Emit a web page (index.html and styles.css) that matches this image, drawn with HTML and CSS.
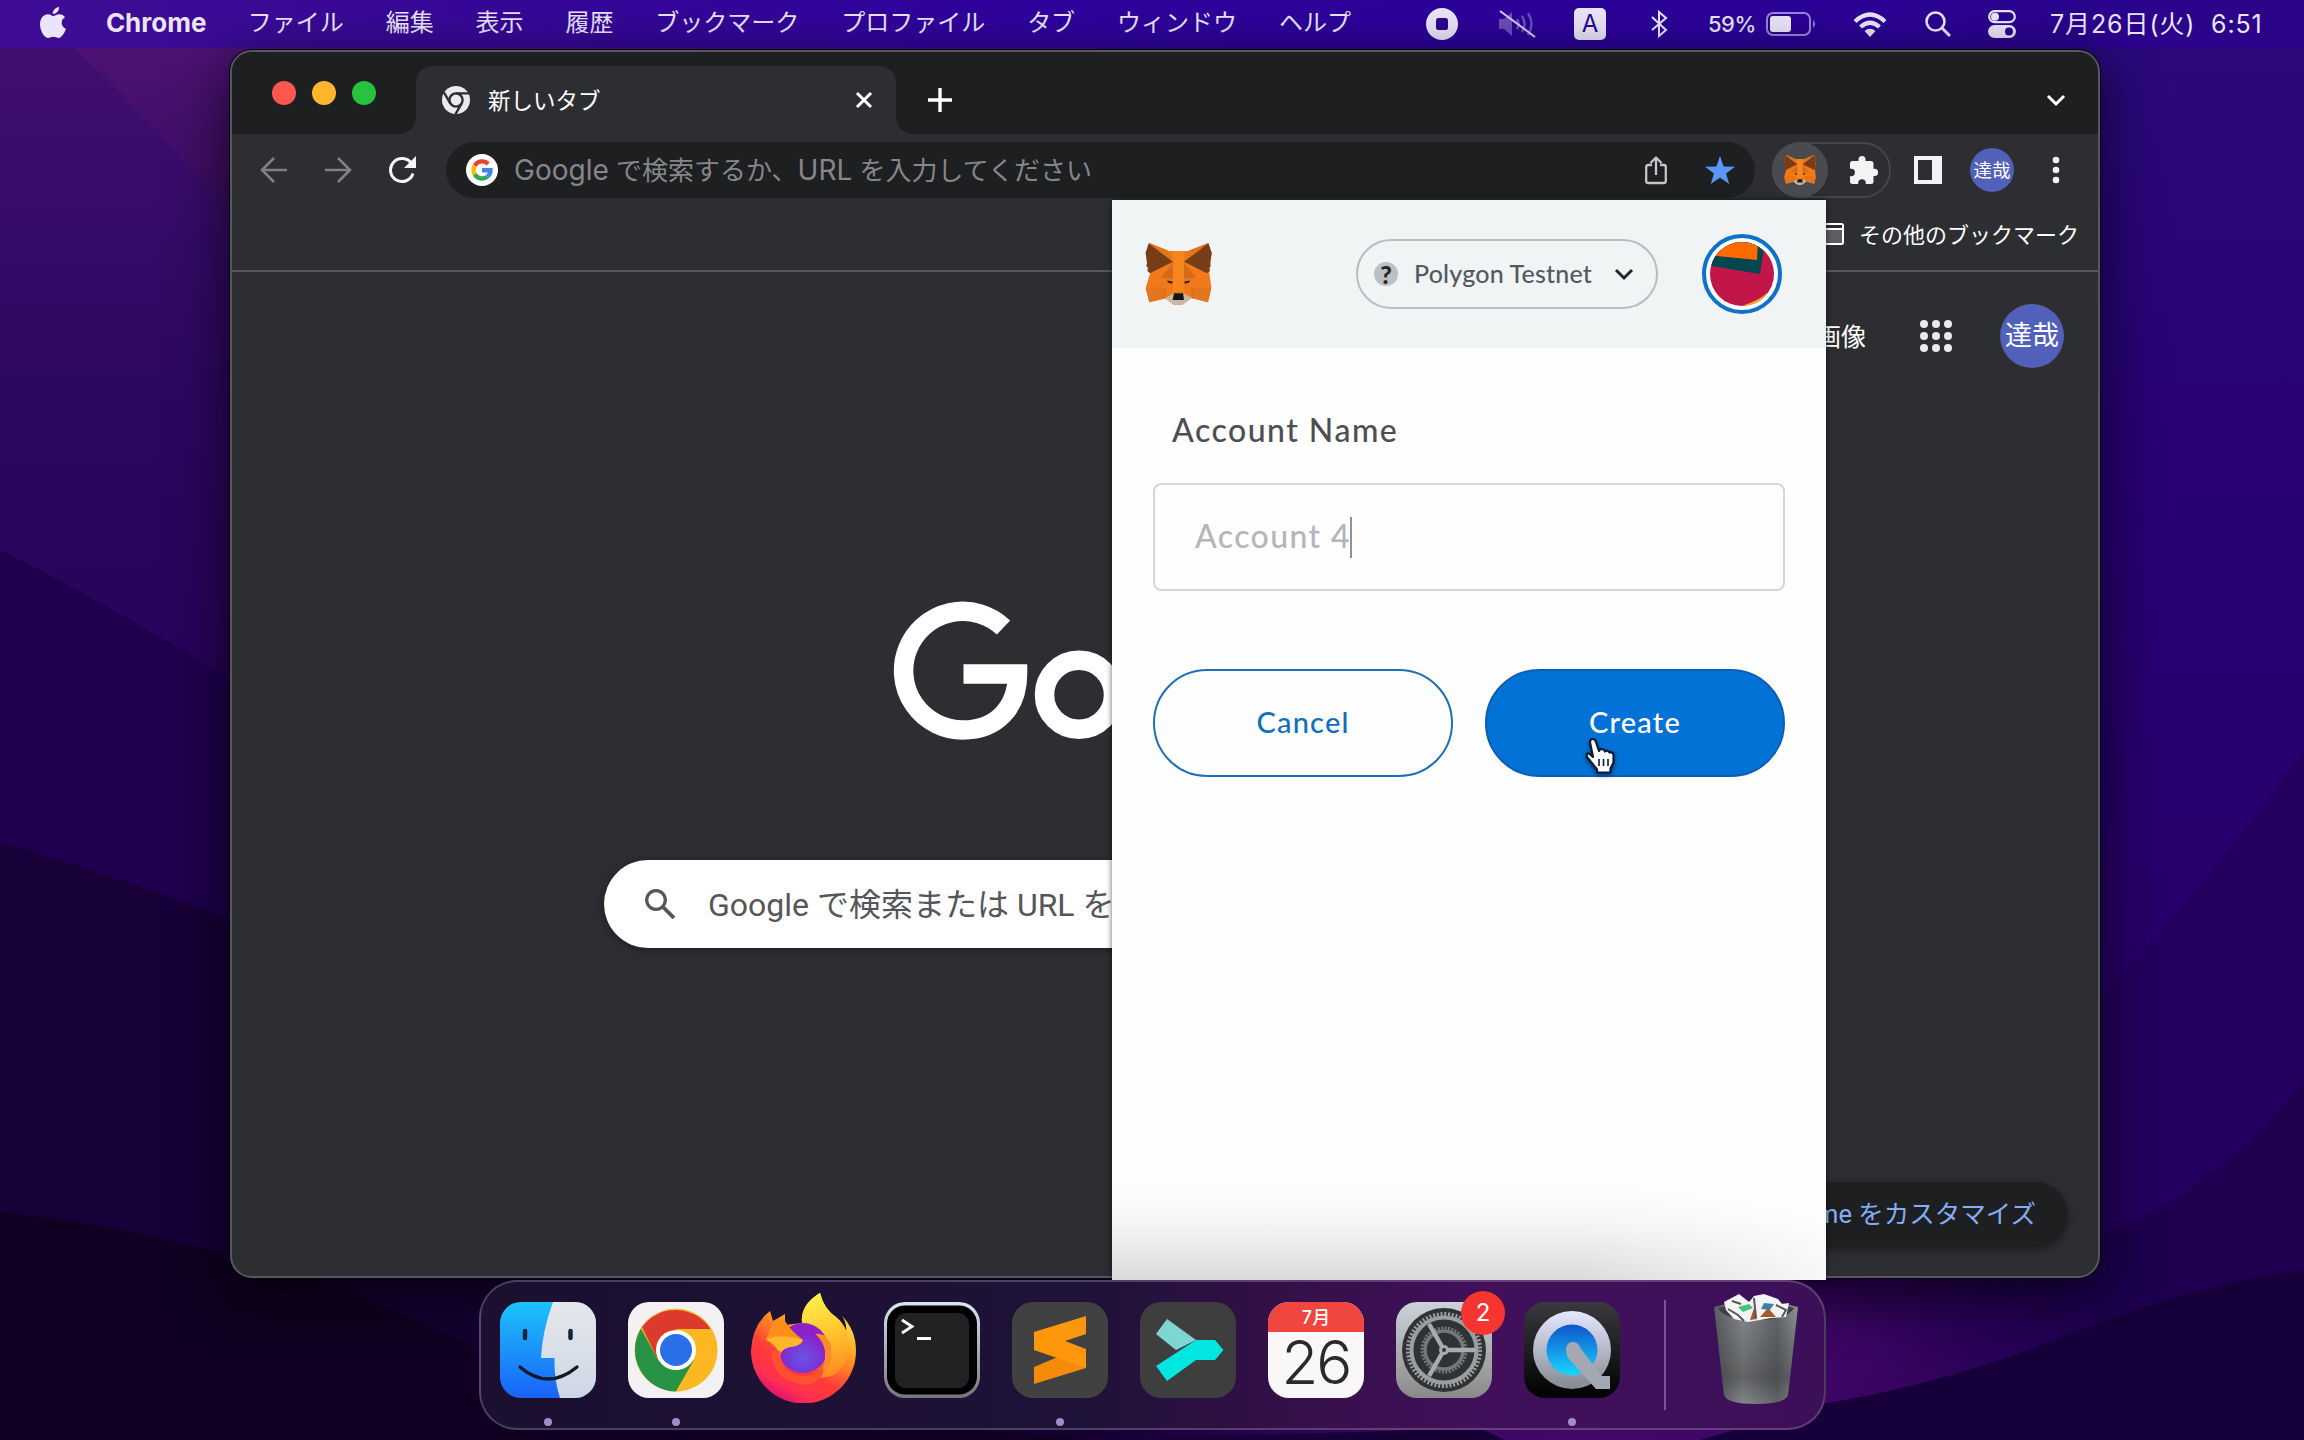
FILE: index.html
```html
<!DOCTYPE html>
<html lang="ja">
<head>
<meta charset="utf-8">
<title>新しいタブ</title>
<link rel="stylesheet" href="styles.css">
</head>
<body>
<svg class="defs" width="0" height="0" aria-hidden="true">
  <defs>
    <symbol id="fox" viewBox="78 100 197 184">
      <path fill="#f07a1b" d="M90 100 148 124h57l60-24 10 30-7 60 6 42-10 44-49-13-27 20h-26l-24-18-48 11-11-42 13-44-13-60z"/>
      <path fill="#e2761b" d="m90 100 58 24 12 32zM265 100l-60 24-12 32z"/>
      <path fill="#763d16" d="m88 101 72 55-68 34-8-8 2-8-5-6 2-8-4-30zM265 101l-72 55 68 34 9-8-3-8 5-6-2-8 5-30z"/>
      <path fill="#d56a1c" d="m160 158-36 46 40 2zM193 158l36 46-40 2z"/>
      <path fill="#cd6116" d="m102 232 36 2-2 32zM251 232l-36 2 2 32z"/>
      <path fill="#e4751f" d="m80 234 56 0-2 30-44 12zM274 234l-57 0 2 30 45 12z"/>
      <path fill="#f6851b" d="M160 124h33v120h-33z"/>
      <path fill="#2b2422" d="m143 211 16 3-1 7-13-4zM210 211l-16 3 1 7 13-4z"/>
      <path fill="#c9b8a8" d="m136 264 25-14h31l25 13-29 20h-26z"/>
      <path fill="#161616" d="M163 249h27l3 20h-34z"/>
    </symbol>
    <linearGradient id="w1" x1="0" y1="0" x2="0" y2="1"><stop offset="0" stop-color="#421074"/><stop offset=".45" stop-color="#2c0761"/><stop offset="1" stop-color="#240055"/></linearGradient>
    <linearGradient id="w2" x1="0" y1="0" x2="0" y2="1"><stop offset="0" stop-color="#531479"/><stop offset="1" stop-color="#3a0c62"/></linearGradient>
    <linearGradient id="w3" x1="0" y1="0" x2="0" y2="1"><stop offset="0" stop-color="#2b0a7c"/><stop offset=".5" stop-color="#270074"/><stop offset="1" stop-color="#270066"/></linearGradient>
    <radialGradient id="w4"><stop offset="0" stop-color="#4c0a74"/><stop offset=".5" stop-color="#3a0562"/><stop offset="1" stop-color="#240058" stop-opacity="0"/></radialGradient>
  </defs>
</svg>

<div class="desktop">
  <svg class="wallpaper" viewBox="0 0 2304 1440" preserveAspectRatio="none" aria-hidden="true">
    <rect width="2304" height="1440" fill="#150032"/>
    <path fill="url(#w1)" d="M0 0h1200v900H0z"/>
    <path fill="url(#w2)" d="M20 0Q140 100 231 220H700V0z"/>
    <path fill="#1f004f" d="M0 550Q140 620 260 700V960L0 860z"/>
    <path fill="#180038" d="M0 842Q130 880 260 930V1300L0 1240z"/>
    <path fill="#110022" d="M0 1212Q260 1240 480 1350 800 1420 1100 1440H0z"/>
    <path fill="url(#w3)" d="M1100 0h1204v1080H1100z"/>
    <path fill="#230060" d="M2304 750Q2210 880 2090 1010L1700 1200V1440H2304z"/>
    <path fill="#1d004f" d="M2304 1080Q2220 1190 2090 1240L1700 1330V1440H2304z"/>
    <ellipse cx="1600" cy="1370" rx="560" ry="200" fill="url(#w4)"/>
    <path fill="#17003a" d="M2304 1270Q2190 1284 2064 1337 1940 1385 1826 1403L1700 1440H2304z"/>
    <path fill="#170036" d="M1100 1440 1480 1428 1505 1440z"/>
  </svg>

  <header class="menubar">
    <nav class="menus">
      <svg class="apple" viewBox="0 0 26 32"><path fill="#ece4fa" d="M19 0c.3 3.800-2.800 7-6.200 7C12.400 3.600 15.600.4 19 0zM13 9c1.700 0 3.400-1.800 6.400-1.800 2.200 0 4.400 1.200 5.600 3-5 3-4.100 9.600 1 11.600C24.600 25.800 21.600 31 18.600 31c-2 0-2.800-1.200-5.200-1.200S10 31 8.200 31C4.600 31 0 23.600 0 17.400 0 10.800 4 7.300 8 7.300 10.300 7.300 11.800 9 13 9z"/></svg>
      <b>Chrome</b><span>ファイル</span><span>編集</span><span>表示</span><span>履歴</span><span>ブックマーク</span><span>プロファイル</span><span>タブ</span><span>ウィンドウ</span><span>ヘルプ</span>
    </nav>
    <div class="status">
      <svg width="32" height="32" viewBox="0 0 32 32"><circle cx="16" cy="16" r="16" fill="#ece6fb"/><rect x="10" y="10" width="12" height="12" rx="2.500" fill="#2c0591"/></svg>
      <svg width="40" height="32" viewBox="0 0 40 32"><path fill="#6a4db8" d="M1 11h5l8-7v24l-8-7H1z"/><path d="M19 11q3 5 0 10M24 8q5 8 0 16M30 5q7 11 0 22" fill="none" stroke="#6a4db8" stroke-width="2.500"/><path d="m2 3 35 26" stroke="#d8cdf5" stroke-width="2"/></svg>
      <span class="ime">A</span>
      <svg width="18" height="28" viewBox="0 0 18 28"><path d="m2 7 14 13-7 6V2l7 6L2 20" fill="none" stroke="#ece6fb" stroke-width="2"/></svg>
      <span class="pct">59%</span>
      <svg width="52" height="24" viewBox="0 0 52 24"><rect x="1" y="1" width="43" height="22" rx="6" fill="none" stroke="#9a86d6" stroke-width="2"/><rect x="4" y="4" width="21" height="16" rx="3" fill="#ece6fb"/><path d="M47 8q4 4 0 8z" fill="#9a86d6"/></svg>
      <svg width="34" height="25" viewBox="0 0 34 25"><g fill="none" stroke="#ece6fb" stroke-width="4.200"><path d="M2 9.500q15-14 30 0M7.500 15q9.500-8.500 19 0"/></g><path fill="#ece6fb" d="m17 25-5.500-6q5.500-4.500 11 0z"/></svg>
      <svg width="26" height="26" viewBox="0 0 26 26"><circle cx="10.500" cy="10.500" r="9" fill="none" stroke="#ece6fb" stroke-width="2.600"/><path d="m17 17 8 8" stroke="#ece6fb" stroke-width="3"/></svg>
      <svg width="28" height="28" viewBox="0 0 28 28"><rect x="1.200" y="1.200" width="25.600" height="11" rx="5.500" fill="none" stroke="#ece6fb" stroke-width="2.200"/><circle cx="7" cy="6.700" r="4" fill="#ece6fb"/><rect y="15" width="28" height="13" rx="6.500" fill="#ece6fb"/><circle cx="21" cy="21.500" r="4" fill="#2c0591"/></svg>
      <span class="date">7月26日(火)</span>
      <span class="time">6:51</span>
    </div>
  </header>

  <main class="window">
    <div class="tabstrip">
      <div class="lights"><i class="red"></i><i class="amber"></i><i class="green"></i></div>
      <div class="tab">
        <svg width="28" height="28" viewBox="0 0 28 28"><circle cx="14" cy="14" r="14" fill="#e8eaed"/><g fill="none" stroke="#2d2e32" stroke-width="2.400"><circle cx="14" cy="14" r="6.600"/><path d="M14 7.400h13M8.300 17.300 2 6.500M19.700 17.300 13.500 28"/></g></svg>
        <span class="tab-title">新しいタブ</span>
        <svg class="close" width="18" height="18" viewBox="0 0 18 18"><path d="m2 2 14 14M16 2 2 16" stroke="#fff" stroke-width="3"/></svg>
      </div>
      <svg class="plus" width="26" height="26" viewBox="0 0 26 26"><path d="M13 1v24M1 13h24" stroke="#fff" stroke-width="3.400"/></svg>
      <svg class="chev" width="20" height="14" viewBox="0 0 20 14"><path d="m2 2 8 8 8-8" fill="none" stroke="#fff" stroke-width="3"/></svg>
    </div>

    <div class="toolbar">
      <svg width="28" height="28" viewBox="0 0 28 28"><path d="M27 14H3M14 2 2 14l12 12" fill="none" stroke="#808185" stroke-width="2.600"/></svg>
      <svg width="28" height="28" viewBox="0 0 28 28"><path d="M1 14h24M14 2l12 12-12 12" fill="none" stroke="#808185" stroke-width="2.600"/></svg>
      <svg width="28" height="28" viewBox="0 0 28 28"><path d="M23.500 7.500A11.500 11.500 0 1 0 25 17.500" fill="none" stroke="#f4f5f7" stroke-width="3"/><path d="M28 0v12H16z" fill="#f4f5f7"/></svg>
      <div class="omnibox">
        <svg width="32" height="32" viewBox="0 0 32 32"><circle cx="16" cy="16" r="16" fill="#fff"/><g fill="none" stroke-width="4.400"><path stroke="#ea4335" d="M8.800 11.600A8.500 8.500 0 0 1 22.200 9.900"/><path stroke="#fbbc05" d="M8.800 20.400a8.500 8.500 0 0 1 0-8.800"/><path stroke="#34a853" d="M21.500 22.600A8.500 8.500 0 0 1 8.800 20.400"/><path stroke="#4285f4" d="M16 16.200h8.500a8.500 8.500 0 0 1-3 6.400"/></g></svg>
        <span class="hint"><span class="lat">Google</span> で検索するか、<span class="lat">URL</span> を入力してください</span>
        <svg class="share" width="24" height="30" viewBox="0 0 24 30"><path d="M8 10H4.200q-2 0-2 2v14q0 2 2 2h15.600q2 0 2-2V12q0-2-2-2H16M12 20V2.500M6.500 8 12 2.500 17.500 8" fill="none" stroke="#c4c6c9" stroke-width="2.300" stroke-linejoin="round"/></svg>
        <svg class="star" width="30" height="28" viewBox="0 0 30 28"><path fill="#5a96f8" d="m15 0 3.600 10.400L30 10.700l-9 6.900L24.300 28 15 21.800 5.700 28 9 17.600 0 10.700l11.400-.3z"/></svg>
      </div>
      <div class="exts">
        <span class="ext-on"><svg width="32" height="30"><use href="#fox"/></svg></span>
        <svg width="28" height="28" viewBox="0 0 28 28"><path fill="#f1f3f4" d="M8.500 3.500a3.500 3.500 0 0 1 7 0V5H21q2.500 0 2.500 2.500v5.300h1a3.600 3.600 0 0 1 0 7.200h-1v5.500Q23.500 28 21 28h-5.200v-1a3.800 3.800 0 0 0-7.600 0v1H2.500Q0 28 0 25.500v-5.300h1.200a3.700 3.700 0 0 0 0-7.400H0V7.500Q0 5 2.500 5h6z"/></svg>
      </div>
      <svg width="28" height="28" viewBox="0 0 28 28"><path fill="#f1f3f4" fill-rule="evenodd" d="M0 0h28v28H0zM4 4v20h14V4z"/></svg>
      <span class="me small">達哉</span>
      <svg width="8" height="28" viewBox="0 0 8 28"><g fill="#f1f3f4"><circle cx="4" cy="4" r="3.300"/><circle cx="4" cy="14" r="3.300"/><circle cx="4" cy="24" r="3.300"/></g></svg>
    </div>

    <div class="bookmarks">
      <svg width="26" height="22" viewBox="0 0 26 22"><rect x="1" y="1" width="24" height="20" rx="1.500" fill="#5d5e61" stroke="#fff" stroke-width="2"/><path fill="#2d2e32" d="M2 2h22v3H2z"/><path fill="#fff" d="M2 5h22v2H2z"/></svg>
      <span>その他のブックマーク</span>
    </div>

    <section class="page">
      <div class="page-top">
        <span class="images">画像</span>
        <svg width="32" height="32" viewBox="0 0 32 32"><g fill="#e8eaed"><circle cx="4" cy="4" r="4"/><circle cx="16" cy="4" r="4"/><circle cx="28" cy="4" r="4"/><circle cx="4" cy="16" r="4"/><circle cx="16" cy="16" r="4"/><circle cx="28" cy="16" r="4"/><circle cx="4" cy="28" r="4"/><circle cx="16" cy="28" r="4"/><circle cx="28" cy="28" r="4"/></g></svg>
        <span class="me">達哉</span>
      </div>
      <svg class="logo" width="240" height="140" viewBox="0 0 240 140" role="img"><g fill="none" stroke="#fff" stroke-width="19.500"><path d="M110.500 26.500A59.300 59.300 0 1 0 70 129C104 129 124.500 106 124.500 73H70.500"/><circle cx="186" cy="93.700" r="34.500"/></g></svg>
      <div class="search">
        <svg width="30" height="30" viewBox="0 0 30 30"><circle cx="11" cy="11" r="9.300" fill="none" stroke="#55565a" stroke-width="3.200"/><path d="m18 18 11 11" stroke="#55565a" stroke-width="3.800"/></svg>
        <span>Google で検索または URL を入力</span>
      </div>
      <div class="customize">Chrome をカスタマイズ</div>
    </section>
  </main>

  <aside class="wallet">
    <div class="wallet-head">
      <svg width="67" height="62"><use href="#fox"/></svg>
      <div class="network">
        <span class="q">?</span><span class="net">Polygon Testnet</span>
        <svg width="20" height="13" viewBox="0 0 20 13"><path d="m2 2 8 8 8-8" fill="none" stroke="#24272a" stroke-width="3"/></svg>
      </div>
      <svg width="80" height="80" viewBox="0 0 80 80"><clipPath id="av"><circle cx="40" cy="40" r="32"/></clipPath><circle cx="40" cy="40" r="38" fill="#fafdff" stroke="#0f72c9" stroke-width="4"/><g clip-path="url(#av)"><path fill="#c21648" d="M0 0h80v80H0z"/><path fill="#00474f" d="m4 31 54 9 4-26 4 6V0H0z"/><path fill="#ff6a00" d="m6 21 49 5 1-20H8z"/><path fill="#fbb01e" d="M40 72q18-6 25-13v13z"/></g></svg>
    </div>
    <div class="form">
      <label class="label">Account Name</label>
      <div class="field"><span>Account 4</span><i></i></div>
      <div class="buttons"><div class="btn">Cancel</div><div class="btn primary">Create</div></div>
    </div>
  </aside>

  <svg class="hand" width="32" height="38" viewBox="0 0 32 38"><path fill="#fff" stroke="#0a1830" stroke-width="2.200" stroke-linejoin="round" d="M9 20 6 5.500Q6 2 8.500 2T12 5l3 9q1-3 4-1.500 1.500 0 2 2 2.500-2 4.500 1 3-1 4 2v8l-3 6v4H13v-3L3 20q-1-4 2-3.500z"/><path d="M15 22v7M19.500 22v7M24 22v7" stroke="#0a1830" stroke-width="1.600"/></svg>

  <footer class="dock">
    <div class="app running"><svg width="96" height="96" viewBox="0 0 96 96"><defs><linearGradient id="fb" x2="0" y2="1"><stop stop-color="#1cc3fd"/><stop offset="1" stop-color="#1a62f8"/></linearGradient><linearGradient id="fw" x2="0" y2="1"><stop stop-color="#e6e7ec"/><stop offset="1" stop-color="#cdd7e4"/></linearGradient><clipPath id="rc"><rect width="96" height="96" rx="21"/></clipPath></defs><g clip-path="url(#rc)"><path fill="url(#fb)" d="M0 0h96v96H0z"/><path fill="url(#fw)" d="M53 0Q42 30 41 56h13.500Q54 78 60 96h36V0z"/></g><path d="M25 29v7M70.500 29v7" stroke="#11253c" stroke-width="4.500" stroke-linecap="round"/><path d="M20 65q28 24 57 0" fill="none" stroke="#10192a" stroke-width="3.300" stroke-linecap="round"/></svg></div>
    <div class="app running"><svg width="96" height="96" viewBox="0 0 96 96"><rect width="96" height="96" rx="21" fill="#f3f1f4"/><circle cx="48" cy="48" r="41.500" fill="#fcb822"/><path fill="#dc3a2c" d="M14 25A41.500 41.500 0 0 1 82.500 27H48L30 58z"/><path fill="#279344" d="M13 26.500A41.500 41.500 0 0 0 48 89.500L66 58 48 67 30 58z"/><path fill="#fcb822" d="M48 27h35.500A41.500 41.500 0 0 1 48 89.500L67 57z"/><circle cx="48" cy="48" r="20" fill="#fff"/><circle cx="48" cy="48" r="16" fill="#2a6fe8"/></svg></div>
    <div class="app"><svg class="ff" width="106" height="110" viewBox="0 0 106 110"><defs><linearGradient id="f1" x1=".8" y1=".1" x2=".3" y2="1"><stop stop-color="#fff04a"/><stop offset=".35" stop-color="#ff9a20"/><stop offset=".65" stop-color="#ff3b3a"/><stop offset=".85" stop-color="#ff2f50"/><stop offset="1" stop-color="#d80f78"/></linearGradient><linearGradient id="f3" x1=".4" y1="0" x2=".6" y2="1"><stop stop-color="#fff04a"/><stop offset=".5" stop-color="#ffc52e"/><stop offset="1" stop-color="#ff8a22"/></linearGradient><radialGradient id="f2" cx=".5" cy=".7"><stop stop-color="#6455e8"/><stop offset="1" stop-color="#8a22c8"/></radialGradient></defs><path fill="url(#f1)" d="M0 58Q1 32 19 18l3 10 12-7v11l17-2Q49 12 69 0q4 16 16 24 8 7 10 14 1-8-4-15 14 14 14 35a52.500 52.500 0 0 1-105 0z"/><path fill="url(#f3)" d="M51 30Q49 12 69 0q4 16 16 24 8 7 10 14 8 22-5 38-8 10-22 8 14-22 5-42-6-12-22-12z"/><circle cx="52" cy="55" r="25" fill="url(#f2)"/><path fill="#ff8a2a" d="M64 41q9-2 15 8 6 24-11 35 7-12 6-26-2-11-10-17z"/><path fill="#ff8d1a" d="M22 30 34 28q6 10 18 19-2 6-10 6-9 2-13 6-1-9-14-13z"/><path fill="#ffb52c" d="M14 46q18-6 38 1-4 7-13 7-9 2-10 9-2-10-15-17z"/><path fill="#ff5030" d="M29 58q1 23 23 25 14 0 20-8 2 12-16 17Q22 90 20 58z"/></svg></div>
    <div class="app"><svg width="96" height="96" viewBox="0 0 96 96"><defs><linearGradient id="t" x2="0" y2="1"><stop stop-color="#d8e5f4"/><stop offset="1" stop-color="#77747c"/></linearGradient></defs><rect width="96" height="96" rx="21" fill="url(#t)"/><rect x="3" y="3.500" width="90" height="89" rx="18" fill="#000"/><rect x="11" y="11" width="74" height="75" rx="11" fill="#222224"/><path d="m18 18 10 6.500L18 31" fill="none" stroke="#fff" stroke-width="2.800"/><path d="M33 36.500h14" stroke="#fff" stroke-width="3"/></svg></div>
    <div class="app running"><svg width="96" height="96" viewBox="0 0 96 96"><rect width="96" height="96" rx="21" fill="#414141"/><path fill="#f58a0b" d="m22 65 26-11 26 12-52 16z"/><path fill="#ff970d" d="m22 30 52-16v18l-21 7 21 8v19L22 48z"/></svg></div>
    <div class="app"><svg width="96" height="96" viewBox="0 0 96 96"><rect width="96" height="96" rx="21" fill="#3e3e3f"/><path fill="#7fd6d0" d="m27 17 29 21-20 10-20-16z"/><path fill="#02e6e2" d="M56 38h19l8.500 10L75 58H56L27 79 16 64z"/></svg></div>
    <div class="app"><div class="cal"><span class="mon">7月</span><span class="day">26</span></div></div>
    <div class="app"><svg width="96" height="96" viewBox="0 0 96 96"><defs><linearGradient id="s" x2="0" y2="1"><stop stop-color="#ccd3d9"/><stop offset="1" stop-color="#8b8988"/></linearGradient></defs><rect width="96" height="96" rx="21" fill="url(#s)"/><circle cx="48" cy="48" r="42" fill="#303234"/><g fill="none" stroke="#9b9ea0"><circle cx="48" cy="48" r="36" stroke-width="4" stroke-dasharray="2 1.770"/><circle cx="48" cy="48" r="32.500" stroke-width="4"/><circle cx="48" cy="48" r="22" stroke="#75787a" stroke-width="3" stroke-dasharray="2 1.450"/><circle cx="48" cy="48" r="19" stroke="#75787a" stroke-width="3.500"/></g><path d="M48 48h31M48 48 33 22M48 48 33 74" stroke="#a9acae" stroke-width="4.500"/><circle cx="48" cy="48" r="5" fill="#a9acae"/><circle cx="48" cy="48" r="2" fill="#303234"/></svg><span class="badge">2</span></div>
    <div class="app running"><svg width="96" height="96" viewBox="0 0 96 96"><defs><linearGradient id="q0" x2="0" y2="1"><stop stop-color="#3a393d"/><stop offset="1" stop-color="#010102"/></linearGradient><linearGradient id="q1" x2="0" y2="1"><stop stop-color="#e6e8ff"/><stop offset="1" stop-color="#84888f"/></linearGradient><linearGradient id="q2" x2="0" y2="1"><stop stop-color="#0e55cc"/><stop offset="1" stop-color="#19d6fe"/></linearGradient></defs><rect width="96" height="96" rx="21" fill="url(#q0)"/><circle cx="48" cy="48" r="39" fill="url(#q1)"/><circle cx="48" cy="48" r="25.500" fill="url(#q2)"/><path fill="#a3a8b3" d="M42 47q1-8 8-7 4 0 7 7l21 27h8v13H72L45 57q-3-4-3-10z"/></svg></div>
    <i class="sep"></i>
    <div class="app trash"><svg width="84" height="112" viewBox="0 0 84 112"><defs><linearGradient id="tr"><stop stop-color="#595c60"/><stop offset=".35" stop-color="#85888a"/><stop offset=".75" stop-color="#626569"/><stop offset="1" stop-color="#8b8e92"/></linearGradient><linearGradient id="ts" x2="0" y2="1"><stop offset=".1" stop-color="#222" stop-opacity="0"/><stop offset=".75" stop-color="#222" stop-opacity=".35"/><stop offset="1" stop-color="#222" stop-opacity="0"/></linearGradient></defs><path fill="url(#tr)" d="M0 14q42-12 84 0L74 102q-3 9-32 9t-32-9z"/><path fill="url(#ts)" d="M0 14q42-12 84 0L74 102q-3 9-32 9t-32-9z"/><path fill="#3d3f43" d="M4 15q38-11 76 0-6 12-38 12T4 15z"/><path fill="#f3f3f4" d="m10 9 15-8 10 8 5-6 10-2 14 5 4 5 7-1-3 14-15 1-11 2-12 2-14-3-8-9z"/><path fill="#3f7fae" d="m50 10 10 1-4 6-9-1z"/><path fill="#42c47e" d="m24 14 11-3 4 4-10 4z"/><path fill="#a65a2c" d="m36 27 4-12 3 11zM46 24l8-9 8 9z"/><path d="m14 16 10 6 6 6M62 12l10 5-4 7M18 8l9 3M40 5l2 20" stroke="#555" stroke-width="2" fill="none"/></svg></div>
  </footer>
</div>
</body>
</html>
```
FILE: styles.css
```css
* { box-sizing: border-box; }
body {
  margin: 0;
  font-family: Inter, "Noto Sans CJK JP", sans-serif;
  color: #fff;
}
svg { display: block; flex: none; }
.defs { position: absolute; }
.desktop {
  position: relative;
  width: 2304px;
  height: 1440px;
  overflow: hidden;
  white-space: nowrap;
}
.wallpaper { position: absolute; inset: 0; width: 100%; height: 100%; }

/* Menu bar */
.menubar {
  position: relative;
  height: 48px;
  display: flex;
  justify-content: space-between;
  padding: 0 39px 0 40px;
  background: linear-gradient(90deg, #3f0d94, #2e039d 45%, #2b0399 75%, #2a0487);
  color: #ece4fa;
  font-size: 24px;
  line-height: 46px;
}
.menus { display: flex; align-items: center; gap: 41.900px; height: 46px; }
.apple { width: 26px; height: 32px; margin-right: -2px; }
.menus b { font-size: 26px; font-weight: 700; width: 100px; }
.status {
  display: grid;
  grid-template-columns: 72px 76px 76px 58px 58px 87px 72px 63px 62px 161px 54px;
  align-items: center;
}
.ime {
  width: 32px;
  height: 32px;
  border-radius: 5px;
  background: #ece6fb;
  color: #2c0591;
  font-size: 24px;
  line-height: 32px;
  text-align: center;
}
.pct { font-size: 22px; font-weight: 500; letter-spacing: -.5px; }
.date, .time { font-size: 25px; letter-spacing: .9px; }

/* Browser window */
.window {
  position: absolute;
  left: 230px;
  top: 50px;
  width: 1870px;
  height: 1228px;
  display: flex;
  flex-direction: column;
  overflow: hidden;
  border: 2px solid #57585d;
  border-radius: 22px;
  background: #2d2e32;
  box-shadow: 0 0 0 1px #0a0414, 0 16px 54px 6px rgba(0, 0, 0, .6);
}
.tabstrip {
  flex: none;
  height: 82px;
  display: flex;
  align-items: flex-end;
  background: #1e1f21;
}
.lights { display: flex; gap: 16px; padding: 0 40px 29px 40px; width: 184px; }
.lights i { flex: none; width: 24px; height: 24px; border-radius: 50%; }
.red { background: #ff5650; }
.amber { background: #ffb62c; }
.green { background: #27c33c; }
.tab {
  position: relative;
  width: 480px;
  height: 68px;
  display: flex;
  align-items: center;
  padding: 0 23px 0 26px;
  border-radius: 16px 16px 0 0;
  background: #2d2e32;
}
.tab::before, .tab::after {
  content: "";
  position: absolute;
  bottom: 0;
  width: 16px;
  height: 16px;
}
.tab::before { left: -16px; background: radial-gradient(circle at 0 0, #1e1f21 15.500px, #2d2e32 16px); }
.tab::after { right: -16px; background: radial-gradient(circle at 100% 0, #1e1f21 15.500px, #2d2e32 16px); }
.tab-title { margin-left: 18px; padding-bottom: 3px; font-size: 22.500px; }
.close { margin-left: auto; }
.plus { margin: 0 0 21px 31px; }
.chev { margin: 0 32px 26px auto; }
.toolbar { flex: none; height: 72px; display: flex; align-items: center; padding: 0 38px 0 28px; }
.toolbar > svg:nth-child(2), .toolbar > svg:nth-child(3) { margin-left: 36px; }
.omnibox {
  width: 1309px;
  height: 56px;
  margin-left: 30px;
  display: flex;
  align-items: center;
  padding: 0 20px;
  border-radius: 28px;
  background: #1e1f21;
}
.hint { margin-left: 16px; padding-bottom: 3px; font-size: 26px; color: #85878b; }
.lat { font-size: 28px; }
.share { margin-left: auto; }
.star { margin-left: 37px; }
.exts {
  width: 119px;
  height: 56px;
  margin-left: 17px;
  display: flex;
  align-items: center;
  gap: 22px;
  border: 2px solid #45464a;
  border-radius: 28px;
}
.ext-on {
  width: 56px;
  height: 56px;
  margin-left: -2px;
  display: grid;
  place-items: center;
  border-radius: 50%;
  background: #4a4b4e;
}
.exts + svg { margin-left: 23px; }
.me {
  width: 64px;
  height: 64px;
  border-radius: 50%;
  background: #5160b8;
  font-size: 27px;
  line-height: 63px;
  text-align: center;
}
.me.small { width: 44px; height: 44px; margin: 0 38px 0 28px; font-size: 18.500px; line-height: 44px; }
.bookmarks {
  flex: none;
  height: 66px;
  padding: 0 19px 11px 0;
  display: flex;
  justify-content: flex-end;
  align-items: center;
  gap: 15px;
  border-bottom: 2px solid #57585b;
  font-size: 22px;
}
.bookmarks svg { margin-top: 3px; }
.page { position: relative; flex: 1; }
.page-top { display: flex; justify-content: flex-end; align-items: center; padding: 32px 34px 0 0; }
.images { margin-right: 54px; padding-bottom: 3px; font-size: 25px; }
.page-top .me { margin-left: 48px; }
.logo { margin: 233px 0 0 661px; }
.search {
  width: 1122px;
  height: 88px;
  margin: 119px 0 0 372px;
  display: flex;
  align-items: center;
  gap: 33px;
  padding: 0 0 0 41px;
  border-radius: 44px;
  background: #fff;
  box-shadow: 0 2px 10px rgba(0, 0, 0, .35);
  color: #55565a;
  font-family: Roboto, "Noto Sans CJK JP", sans-serif;
  font-size: 32px;
}
.search span { padding-bottom: 5px; }
.customize {
  position: absolute;
  right: 30px;
  bottom: 29px;
  height: 65px;
  padding: 0 32px 0 60px;
  border-radius: 33px;
  background: #1e1f21;
  box-shadow: 0 3px 10px rgba(0, 0, 0, .35);
  color: #83adf5;
  font-family: Roboto, "Noto Sans CJK JP", sans-serif;
  font-size: 25.500px;
  line-height: 64px;
}

/* Wallet popup */
.wallet {
  position: absolute;
  left: 1112px;
  top: 200px;
  width: 714px;
  height: 1080px;
  background: radial-gradient(ellipse 160% 100% at 42% 100%, rgba(0, 0, 0, .14), rgba(0, 0, 0, .09) 35%, rgba(0, 0, 0, 0)) no-repeat 0 100% / 80% 95px, linear-gradient(90deg, rgba(0, 0, 0, .08), rgba(0, 0, 0, 0)) no-repeat 100% 100% / 0 0, #fefefe;
  background: linear-gradient(90deg, rgba(254, 254, 254, 0) 65%, rgba(254, 254, 254, .8)) no-repeat 0 100% / 100% 100px, linear-gradient(rgba(0, 0, 0, 0), rgba(0, 0, 0, .03) 40%, rgba(0, 0, 0, .14)) no-repeat 0 100% / 100% 100px, #fefefe;
  box-shadow: 0 0 6px rgba(0, 0, 0, .6);
  font-family: Lato, sans-serif;
}
.wallet-head {
  height: 148px;
  display: flex;
  align-items: center;
  padding: 0 44px 0 33px;
  background: #f1f4f5;
}
.network {
  width: 302px;
  height: 70px;
  margin: 0 44px 0 auto;
  display: flex;
  align-items: center;
  padding: 0 22px 0 16px;
  border: 2px solid #b9bcc0;
  border-radius: 35px;
  color: #535a61;
}
.q {
  width: 24px;
  height: 24px;
  border-radius: 50%;
  background: #bbc0c5;
  color: #24272a;
  font: 900 25px/24px Lato, sans-serif;
  text-align: center;
}
.net { margin: 0 auto 2px 16px; font-size: 25px; font-weight: 500; letter-spacing: .2px; }
.form { padding: 60px 41px; }
.label {
  display: block;
  padding-left: 19px;
  color: #4c4e54;
  font-size: 32px;
  font-weight: 500;
  letter-spacing: 1.500px;
  line-height: 44px;
}
.field {
  height: 108px;
  margin-top: 31px;
  display: flex;
  align-items: center;
  padding-left: 40px;
  border: 2px solid #d4d6d8;
  border-radius: 8px;
  color: #b4b6b9;
  font-size: 32px;
  font-weight: 500;
  letter-spacing: 1.400px;
}
.field span { padding-bottom: 3px; margin-right: -1px; }
.field i { width: 2px; height: 41px; background: #8f9194; }
.buttons { display: flex; justify-content: space-between; margin-top: 78px; }
.btn {
  width: 300px;
  height: 108px;
  border: 2px solid #1d6fb8;
  border-radius: 54px;
  color: #1070bd;
  font-size: 29px;
  font-weight: 500;
  letter-spacing: 1.200px;
  line-height: 102px;
  text-align: center;
}
.btn.primary { border-color: #0a5fb4; background: #0372d6; color: #fff; }
.hand { position: absolute; left: 1584px; top: 737px; filter: drop-shadow(0 2px 2px rgba(0, 0, 0, .5)); }

/* Dock */
.dock {
  position: absolute;
  left: 479px;
  top: 1280px;
  width: 1347px;
  height: 150px;
  display: flex;
  align-items: flex-start;
  gap: 32px;
  padding: 20px 0 0 19px;
  border: 2px solid rgba(255, 255, 255, .2);
  border-radius: 38px;
  background: linear-gradient(90deg, #1b1030, #1f1238 45%, #341049 60%, #42105b 75%, #3c1058);
}
.app { position: relative; width: 96px; height: 128px; flex: none; }
.app.running::after {
  content: "";
  position: absolute;
  left: 44px;
  bottom: 4px;
  width: 8px;
  height: 8px;
  border-radius: 50%;
  background: #a48bc9;
}
.ff { margin: -9px 0 0 -5px; }
.cal {
  width: 96px;
  height: 96px;
  display: flex;
  flex-direction: column;
  overflow: hidden;
  border-radius: 21px;
  background: #f9f7f8;
  text-align: center;
}
.mon { height: 30px; background: #f1463f; font-size: 18px; font-weight: 500; line-height: 31px; }
.day { color: #2a2a2c; font-size: 60px; font-weight: 300; line-height: 61px; letter-spacing: -2px; }
.badge {
  position: absolute;
  left: 65px;
  top: -11px;
  width: 44px;
  height: 44px;
  border-radius: 50%;
  background: #f63430;
  font-size: 24px;
  line-height: 44px;
  text-align: center;
}
.sep { width: 2px; height: 110px; margin: -2px 0 0 12px; background: rgba(220, 180, 240, .4); }
.trash { width: 84px; margin: -9px 0 0 16px; }
```
